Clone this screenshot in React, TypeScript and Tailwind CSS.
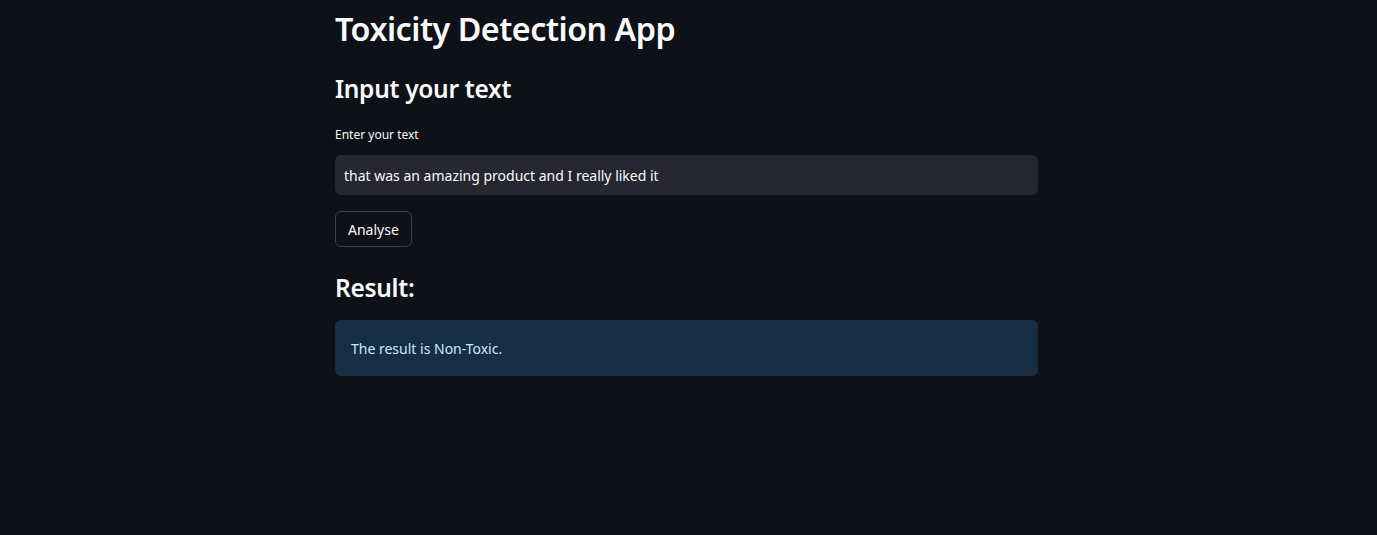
export default function App() {
  return (
    <main className="min-h-screen bg-[#0e1117] text-[#fafafa]" style={{ fontFamily: '"Noto Sans", "Open Sans", sans-serif' }}>
      <div className="w-[703px] ml-[335px] pt-[8px]">
        <h1 className="text-[32.3px] font-semibold leading-[40px] tracking-[-0.5px]">Toxicity Detection App</h1>

        <h2 className="mt-[24px] text-[24.5px] font-semibold leading-[34px] tracking-[-0.3px]">Input your text</h2>

        <label className="block mt-[21px] text-[12px] leading-[16px] text-[#fafafa]">Enter your text</label>
        <div className="mt-[12px] h-[40px] rounded-md bg-[#262730] flex items-center px-[9px] text-[14px] text-[#fafafa]">
          that was an amazing product and I really liked it
        </div>

        <button
          type="button"
          className="mt-[16px] h-[36px] px-[12px] rounded-md border border-[#3d3e48] bg-[#0e1117] text-[14px] text-[#fafafa]"
        >
          Analyse
        </button>

        <h2 className="mt-[24px] text-[24.5px] font-semibold leading-[34px] tracking-[-0.3px]">Result:</h2>

        <div className="mt-[15px] h-[56px] rounded-md bg-[#172d43] flex items-center px-[16px] text-[14px] text-[#c7ebff]">
          The result is Non-Toxic.
        </div>
      </div>
    </main>
  );
}
